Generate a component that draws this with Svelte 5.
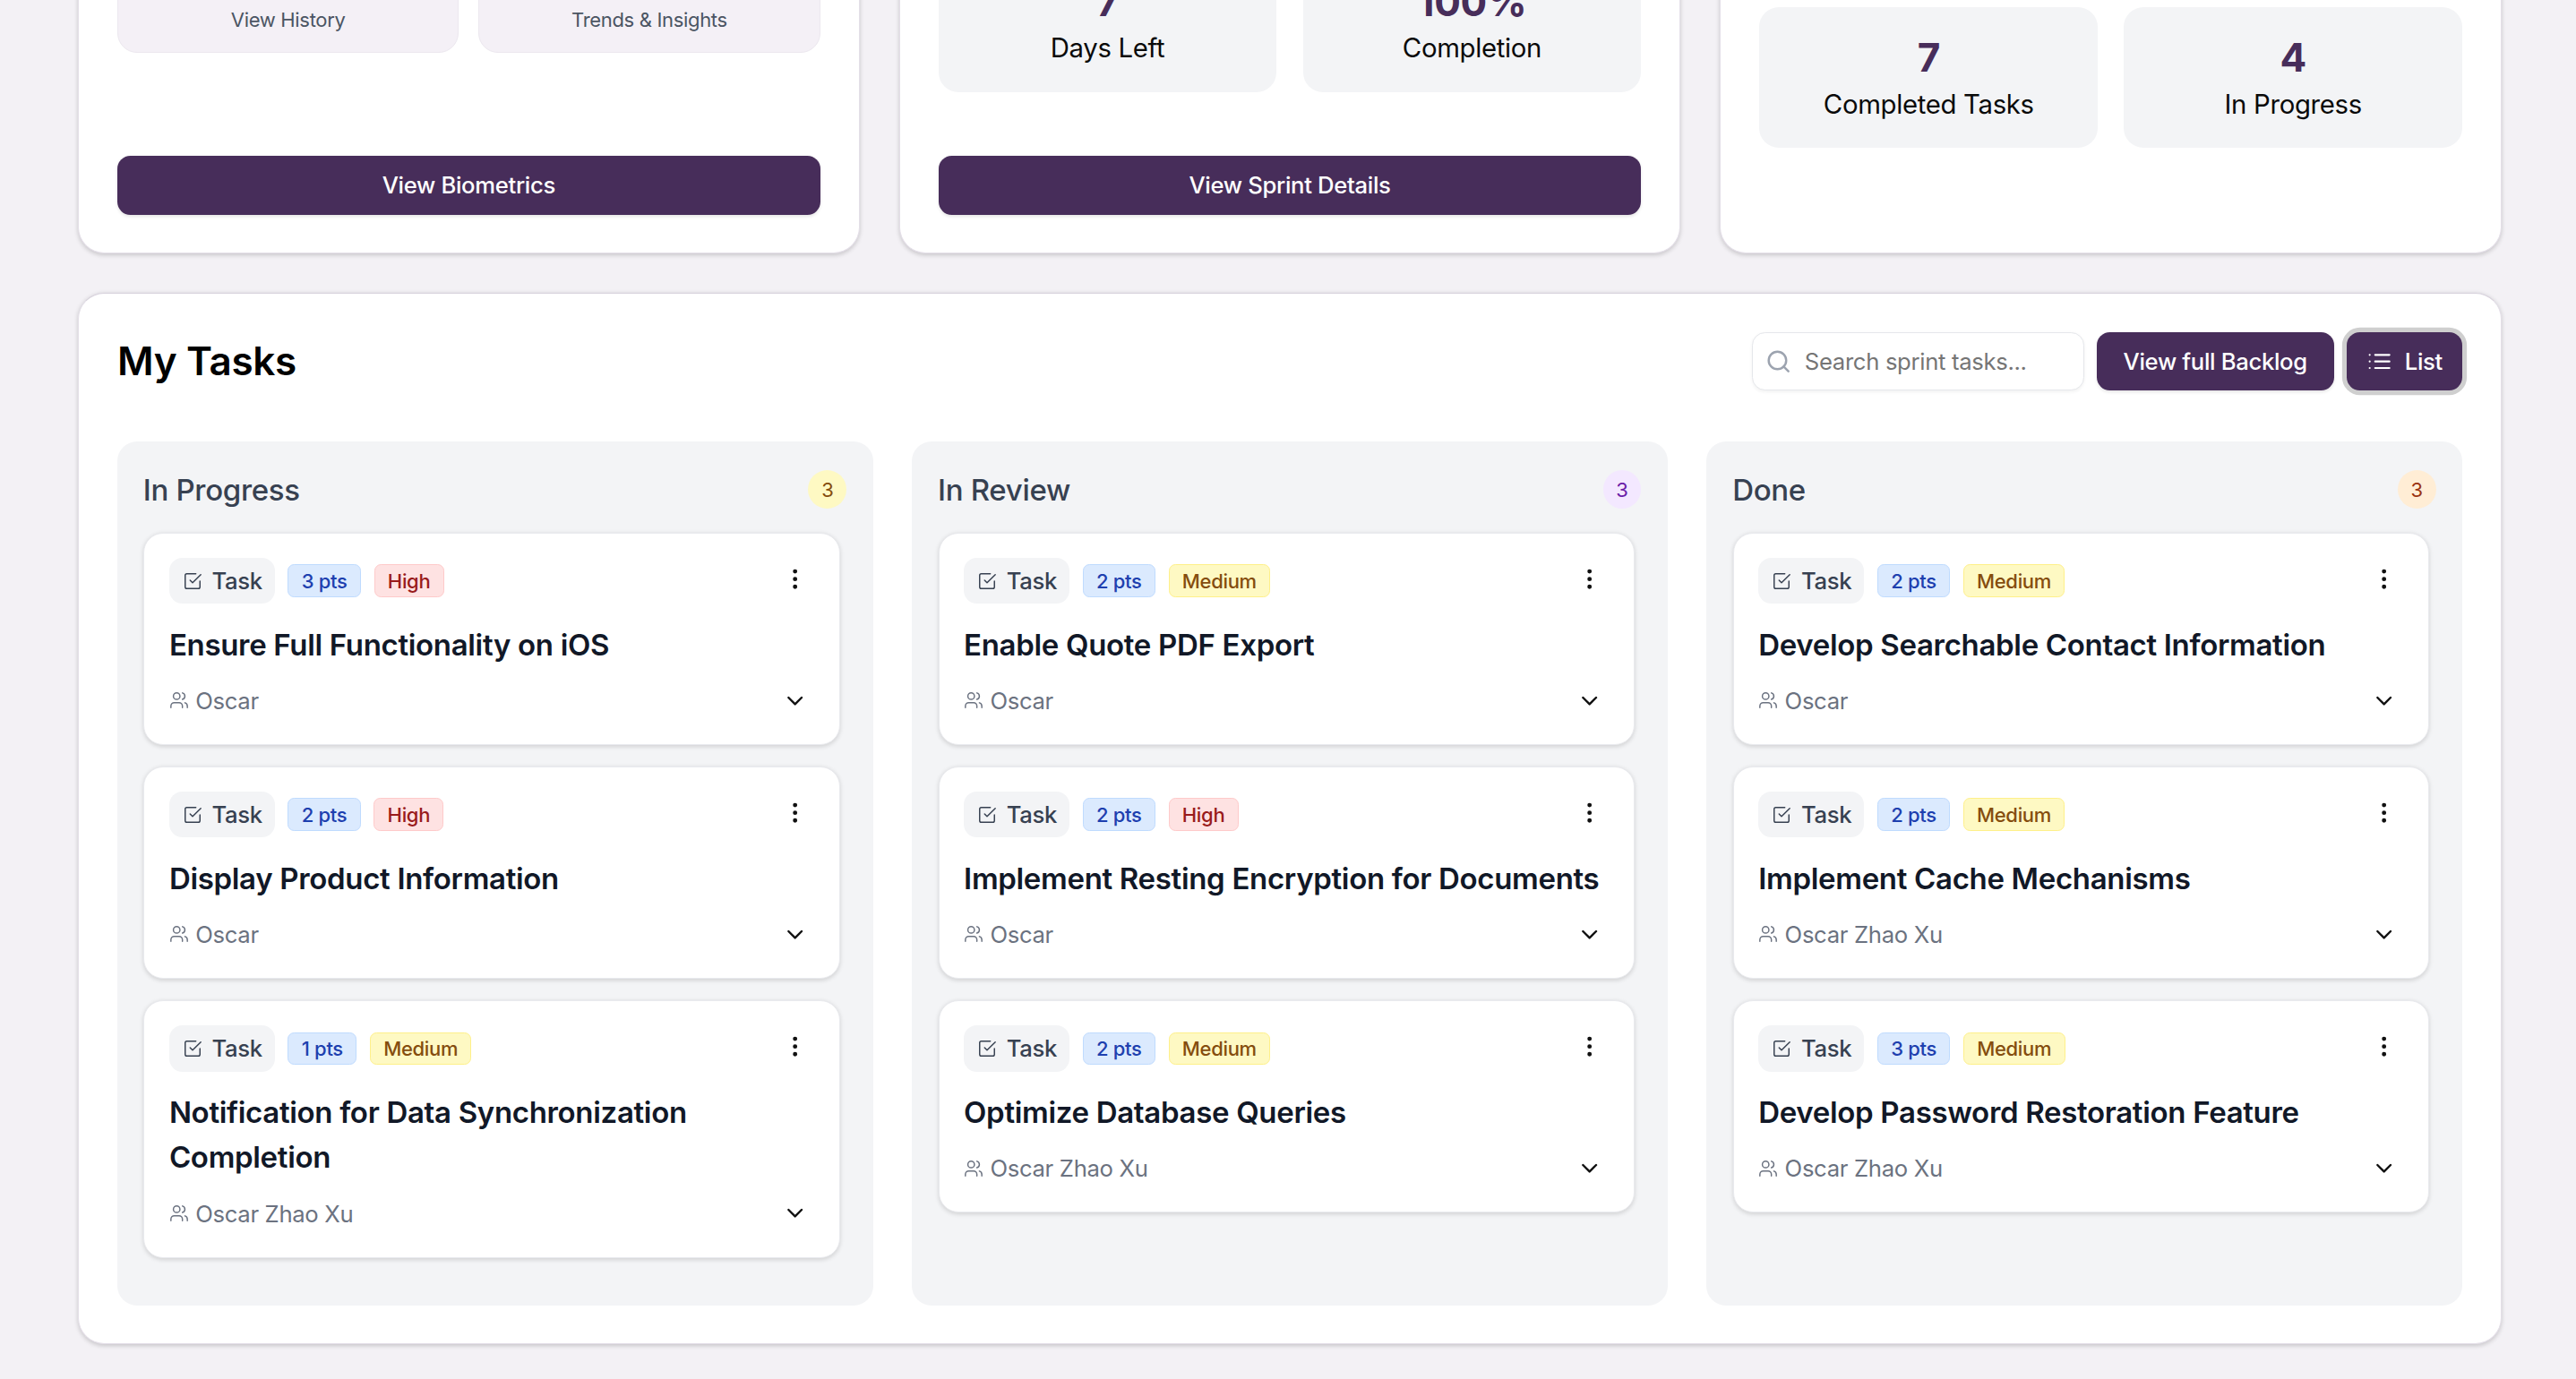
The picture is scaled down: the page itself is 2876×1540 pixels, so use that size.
<script>
  const columns = [
    { name: 'In Progress', tone: 'yellow', cards: [
      { pts: 3, pri: 'High', title: 'Ensure Full Functionality on iOS', who: 'Oscar' },
      { pts: 2, pri: 'High', title: 'Display Product Information', who: 'Oscar' },
      { pts: 1, pri: 'Medium', title: 'Notification for Data Synchronization Completion', who: 'Oscar Zhao Xu' }
    ]},
    { name: 'In Review', tone: 'purple', cards: [
      { pts: 2, pri: 'Medium', title: 'Enable Quote PDF Export', who: 'Oscar' },
      { pts: 2, pri: 'High', title: 'Implement Resting Encryption for Documents', who: 'Oscar' },
      { pts: 2, pri: 'Medium', title: 'Optimize Database Queries', who: 'Oscar Zhao Xu' }
    ]},
    { name: 'Done', tone: 'orange', cards: [
      { pts: 2, pri: 'Medium', title: 'Develop Searchable Contact Information', who: 'Oscar' },
      { pts: 2, pri: 'Medium', title: 'Implement Cache Mechanisms', who: 'Oscar Zhao Xu' },
      { pts: 3, pri: 'Medium', title: 'Develop Password Restoration Feature', who: 'Oscar Zhao Xu' }
    ]}
  ];
</script>

<div class="viewport">
  <div class="page">
    <section class="top-row">
      <article class="card top-card">
        <div class="tiles">
          <div class="tile">View History</div>
          <div class="tile">Trends &amp; Insights</div>
        </div>
        <button class="primary wide">View Biometrics</button>
      </article>
      <article class="card top-card">
        <div class="stats">
          <div class="stat"><div class="num">7</div><div class="lbl">Days Left</div></div>
          <div class="stat"><div class="num">100%</div><div class="lbl">Completion</div></div>
        </div>
        <button class="primary wide">View Sprint Details</button>
      </article>
      <article class="card top-card">
        <div class="stats third">
          <div class="stat"><div class="num">7</div><div class="lbl">Completed Tasks</div></div>
          <div class="stat"><div class="num">4</div><div class="lbl">In Progress</div></div>
        </div>
      </article>
    </section>

    <section class="card panel">
      <header class="panel-head">
        <h2>My Tasks</h2>
        <div class="tools">
          <label class="search">
            <svg viewBox="0 0 24 24" class="i16"><circle cx="11" cy="11" r="8"/><path d="m21 21-4.3-4.3"/></svg>
            <input placeholder="Search sprint tasks..." />
          </label>
          <button class="primary tool">View full Backlog</button>
          <button class="primary tool list">
            <svg viewBox="0 0 24 24" class="i16 thin"><path d="M8 6h13M8 12h13M8 18h13M3 6h.01M3 12h.01M3 18h.01"/></svg>
            List
          </button>
        </div>
      </header>

      <div class="board">
        {#each columns as col}
          <div class="column">
            <div class="col-head">
              <h3>{col.name}</h3>
              <span class="count {col.tone}">{col.cards.length}</span>
            </div>
            {#each col.cards as c}
              <div class="task">
                <div class="task-top">
                  <span class="chip">
                    <svg viewBox="0 0 24 24" class="i12"><path d="m9 11 3 3L22 4"/><path d="M21 12v7a2 2 0 0 1-2 2H5a2 2 0 0 1-2-2V5a2 2 0 0 1 2-2h11"/></svg>
                    Task
                  </span>
                  <span class="badge pts">{c.pts} pts</span>
                  <span class="badge {c.pri.toLowerCase()}">{c.pri}</span>
                  <svg viewBox="0 0 24 24" class="i16 kebab"><circle cx="12" cy="5" r="1"/><circle cx="12" cy="12" r="1"/><circle cx="12" cy="19" r="1"/></svg>
                </div>
                <h4>{c.title}</h4>
                <div class="task-foot">
                  <span class="who">
                    <svg viewBox="0 0 24 24" class="i12"><path d="M16 21v-2a4 4 0 0 0-4-4H6a4 4 0 0 0-4 4v2"/><circle cx="9" cy="7" r="4"/><path d="M22 21v-2a4 4 0 0 0-3-3.87"/><path d="M16 3.13a4 4 0 0 1 0 7.75"/></svg>
                    {c.who}
                  </span>
                  <svg viewBox="0 0 24 24" class="i16 chev"><path d="m6 9 6 6 6-6"/></svg>
                </div>
              </div>
            {/each}
          </div>
        {/each}
      </div>
    </section>
  </div>
</div>

<style>
  :global(body) { margin: 0; background: #f3f1f5; overflow: hidden; }
  .viewport { height: 1540px; overflow: hidden; display: flex; flex-direction: column; justify-content: flex-end; }
  .page { zoom: 1.83418; padding: 0 45.2px 21.5px 47.4px; font-family: Inter, "Liberation Sans", sans-serif; letter-spacing: -0.011em; color: #111827; display: flex; flex-direction: column; gap: 24px; flex: none; }
  svg { fill: none; stroke: currentColor; stroke-width: 2; stroke-linecap: round; stroke-linejoin: round; flex: none; }
  .i12 { width: 12px; height: 12px; stroke-width: 1.6; }
  .i16 { width: 16px; height: 16px; }
  .thin { stroke-width: 1.8; }
  .card { background: #fff; border: 1px solid #e4dfe8; border-top-color: #d8d2dd; border-radius: 16px; box-shadow: 0 1px 3px rgba(0,0,0,.18); box-sizing: border-box; }
  .top-row { display: grid; grid-template-columns: repeat(3, 1fr); gap: 24px; }
  .top-card { height: 240px; padding: 24px 23.5px 23px; display: flex; flex-direction: column; justify-content: flex-end; }
  .top-card > * { flex: none; }
  .tiles { display: grid; grid-template-columns: 1fr 1fr; gap: 12px; margin-bottom: 62.7px; }
  .tile { background: #f4f0f6; border: 1px solid #ece8ef; border-radius: 12px; height: 110px; box-sizing: border-box; display: flex; align-items: flex-end; justify-content: center; padding-bottom: 10.8px; font-size: 12px; line-height: 18px; color: #4b5563; }
  .stats { display: grid; grid-template-columns: 1fr 1fr; gap: 16px; margin-bottom: 39.2px; }
  .stats.third { margin-bottom: 40.5px; }
  .stat { background: #f3f4f6; border-radius: 12px; padding: 16.8px 16px 0; text-align: center; height: 86px; box-sizing: border-box; }
  .num { font-size: 24px; line-height: 29px; font-weight: 700; color: #472d5a; }
  .lbl { font-size: 16px; line-height: 24px; margin-top: 1.7px; color: #0a0a0a; }
  .primary { background: #472d5a; color: #fff; border: 0; font-family: inherit; font-weight: 500; font-size: 14px; letter-spacing: inherit; border-radius: 8px; box-shadow: 0 1px 2px rgba(0,0,0,.1); }
  .wide { height: 35.5px; width: 100%; padding: 0; }
  .panel { padding: 23px 23.5px; height: 640px; }
  .panel-head { display: flex; align-items: center; justify-content: space-between; height: 36.4px; margin-bottom: 30.6px; }
  h2 { margin: 0; font-size: 24px; font-weight: 600; color: #000; }
  .tools { display: flex; align-items: center; gap: 7.6px; }
  .search { display: flex; align-items: center; gap: 8px; width: 202px; height: 35.5px; box-sizing: border-box; background: #fff; border: 1px solid #e5e7eb; border-radius: 8px; padding: 0 7.4px; color: #9ca3af; box-shadow: 0 1px 2px rgba(0,0,0,.05); }
  .search input { border: 0; outline: 0; flex: 1; min-width: 0; padding: 0; font: 14px Inter, sans-serif; letter-spacing: inherit; background: transparent; }
  .search input::placeholder { color: #757575; opacity: 1; }
  .tool { height: 35.5px; padding: 0 16.3px; display: flex; align-items: center; gap: 7px; }
  .list { padding: 0 12px; gap: 7.5px; box-shadow: 0 0 0 2.8px #cfcfcf; }
  .board { display: grid; grid-template-columns: repeat(3, 1fr); gap: 23.8px; height: 526px; }
  .column { background: #f3f4f6; border-radius: 12px; padding: 16px 20px 0 16px; }
  .col-head { display: flex; align-items: center; justify-content: space-between; height: 24px; margin: 1.5px -4px 14px -0.3px; }
  h3 { margin: 0; font-size: 18px; font-weight: 500; color: #374151; }
  .count { width: 23.4px; height: 23.4px; border-radius: 50%; display: grid; place-items: center; font-size: 12px; }
  .yellow { background: #fef9c3; color: #854d0e; }
  .purple { background: #f3e8ff; color: #6b21a8; }
  .orange { background: #ffedd5; color: #9a3412; }
  .task { background: #fff; border: 1px solid #e9eaee; border-radius: 12px; box-shadow: 0 1px 3px rgba(0,0,0,.14); padding: 15px 15px 16.6px; margin-bottom: 12.8px; box-sizing: border-box; }
  .task-top { display: flex; align-items: center; gap: 8px; height: 28px; }
  .chip { display: inline-flex; align-items: center; gap: 6px; height: 28px; padding: 0 7.6px 0 8px; background: #f3f4f6; border-radius: 8px; font-size: 14px; font-weight: 500; color: #374151; }
  .badge { display: inline-flex; align-items: center; height: 20px; box-sizing: border-box; padding: 0 7.8px; border: 1px solid; border-radius: 4px; font-size: 12px; font-weight: 500; }
  .pts { background: #dbeafe; border-color: #bfdbfe; color: #1e40af; }
  .high { background: #fee2e2; border-color: #fecaca; color: #991b1b; }
  .medium { background: #fef9c3; border-color: #fef08a; color: #854d0e; }
  .kebab { margin-left: auto; margin-right: 4px; color: #111; position: relative; top: -1px; }
  h4 { margin: 11px 0 10.4px; font-size: 18px; line-height: 27.5px; font-weight: 600; color: #111827; }
  .task-foot { display: flex; align-items: center; justify-content: space-between; height: 20px; }
  .who { display: inline-flex; align-items: center; gap: 4px; font-size: 14px; color: #6b7280; }
  .chev { color: #111; margin-right: 4px; }
</style>
